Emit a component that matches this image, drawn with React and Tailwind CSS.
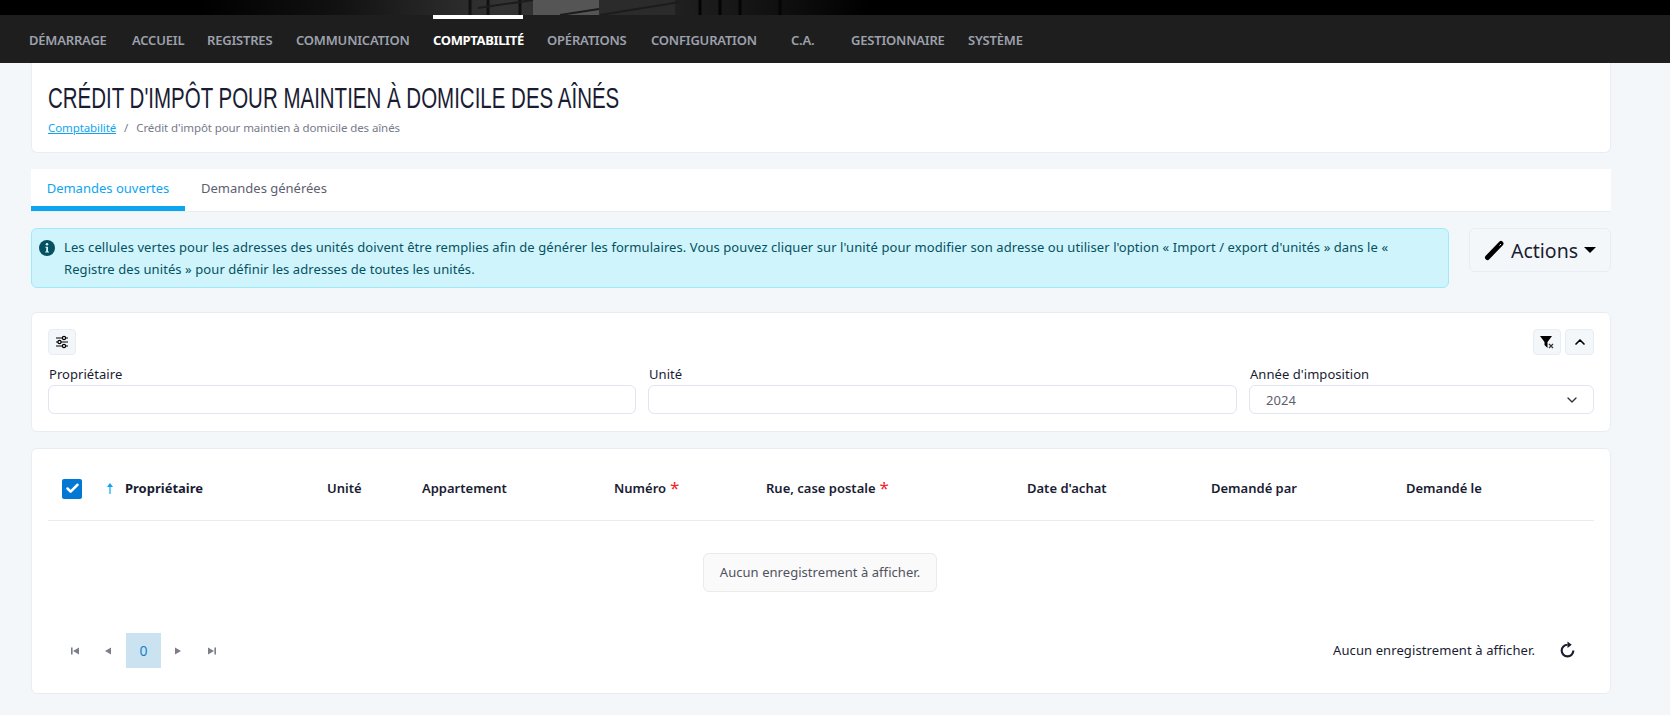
import React from 'react';
import { ChevronDown, ChevronUp, Check } from 'lucide-react';

const NAV_ITEMS = [
    { label: 'DÉMARRAGE', cls: 'ml-[29px] w-[79px]' },
    { label: 'ACCUEIL', cls: 'ml-[24px] w-[50px]' },
    { label: 'REGISTRES', cls: 'ml-[25px] w-[65px]' },
    { label: 'COMMUNICATION', cls: 'ml-[24px] w-[113px]' },
    { label: 'COMPTABILITÉ', cls: 'ml-[24px] w-[90px]', active: true },
    { label: 'OPÉRATIONS', cls: 'ml-[24px] w-[79px]' },
    { label: 'CONFIGURATION', cls: 'ml-[25px] w-[104px]' },
    { label: 'C.A.', cls: 'ml-[36px] w-[24px]' },
    { label: 'GESTIONNAIRE', cls: 'ml-[36px] w-[93px]' },
    { label: 'SYSTÈME', cls: 'ml-[24px] w-[56px]' },
];

const COLUMNS = [
    { label: 'Unité', cls: 'w-[95px]' },
    { label: 'Appartement', cls: 'w-[192px]' },
    { label: 'Numéro', cls: 'w-[152px]', required: true },
    { label: 'Rue, case postale', cls: 'w-[261px]', required: true },
    { label: "Date d'achat", cls: 'w-[184px]' },
    { label: 'Demandé par', cls: 'w-[195px]' },
    { label: 'Demandé le', cls: 'w-[100px]' },
];

const PagerIcon = ({ d }) => (
    <svg width="10" height="10" viewBox="0 0 10 10" className="fill-[#7b7f8c]">
        <path d={d} />
    </svg>
);

const SmallButton = ({ children, cls }) => (
    <button className={`flex items-center justify-center h-[26px] rounded-[4px] border border-[#e8edf3] bg-[#f4f7fa] text-black ${cls}`}>
        {children}
    </button>
);

const TopStrip = () => (
    <svg width="1670" height="15" viewBox="0 0 1670 15" className="block">
        <defs>
            <linearGradient id="strip" x1="0" x2="1" y1="0" y2="0">
                <stop offset="0" stopColor="#000" />
                <stop offset="0.12" stopColor="#000" />
                <stop offset="0.2" stopColor="#111" />
                <stop offset="0.26" stopColor="#262626" />
                <stop offset="0.3" stopColor="#333" />
                <stop offset="0.36" stopColor="#2c2c2c" />
                <stop offset="0.42" stopColor="#1c1c1c" />
                <stop offset="0.48" stopColor="#0c0c0c" />
                <stop offset="0.52" stopColor="#000" />
                <stop offset="1" stopColor="#000" />
            </linearGradient>
        </defs>
        <rect width="1670" height="15" fill="url(#strip)" />
        <rect x="533" y="0" width="66" height="15" fill="#555" />
        <rect x="600" y="0" width="75" height="15" fill="#2b2b2b" />
        <path d="M470 0V15M488 0V15M520 0V15" stroke="#111" strokeWidth="3" />
        <path d="M478 8L533 0M560 15L599 9M600 15L680 2" stroke="#1c1c1c" strokeWidth="2" />
        <path d="M700 0V15M720 0V15M740 0V15M780 0V15" stroke="#050505" strokeWidth="3" />
    </svg>
);

const App = () => {
    return (
        <div className="w-[1670px] h-[715px] overflow-hidden bg-[#f4f7fa] text-[#1a1c33] font-['Noto_Sans','Open_Sans',sans-serif] text-[13px]">
            <TopStrip />

            {/* Nav */}
            <nav className="h-[48px] bg-[#1e1e1e] flex items-center text-[13px] font-semibold tracking-[-0.2px] text-[#9da1ad]">
                {NAV_ITEMS.map((item) => (
                    <div
                        key={item.label}
                        className={`relative h-full flex items-center pt-[4px] whitespace-nowrap ${item.cls} ${item.active ? 'text-white font-bold tracking-[-0.35px]' : ''}`}
                    >
                        {item.active && <span className="absolute top-0 left-0 right-0 h-[4px] bg-white" />}
                        {item.label}
                    </div>
                ))}
            </nav>

            <main className="px-[31px] w-[1612px] box-content">
                <div className="w-[1580px]">
                    {/* Title card */}
                    <section className="h-[90px] bg-white border border-t-0 border-[#e8edf3] rounded-b-[6px] px-[16px] pt-[16px]">
                        <h1 className="text-[30px] leading-[38px] origin-left scale-x-[0.683] font-['Liberation_Sans',sans-serif] text-[#1a1c33] whitespace-nowrap">
                            CRÉDIT D'IMPÔT POUR MAINTIEN À DOMICILE DES AÎNÉS
                        </h1>
                        <p className="mt-[3px] text-[11.5px] tracking-[-0.1px] leading-[16px] text-[#777a8a]">
                            <span className="text-[#0ea5f0] underline">Comptabilité</span>
                            <span className="mx-[8px]">/</span>
                            Crédit d'impôt pour maintien à domicile des aînés
                        </p>
                    </section>

                    {/* Tabs */}
                    <div className="mt-[16px] h-[43px] bg-white border-b border-[#e8edf3] flex text-[13px]">
                        <div className="w-[154px] h-[42px] flex items-center justify-center text-[#0ea5f0] border-b-[5px] border-[#0ea5f0] pt-[3px]">
                            Demandes ouvertes
                        </div>
                        <div className="ml-[16px] h-[37px] pt-[3px] flex items-center text-[#5e6070]">Demandes générées</div>
                    </div>

                    {/* Alert + actions */}
                    <div className="mt-[16px] flex items-start justify-between">
                        <div className="w-[1418px] h-[60px] rounded-[6px] border border-[#9eeaf9] bg-[#cff4fc] text-[#055160] flex pl-[7px] pt-[7px] leading-[22px]">
                            <svg width="16" height="16" viewBox="0 0 16 16" className="mt-[4px] shrink-0">
                                <circle cx="8" cy="8" r="8" fill="#055160" />
                                <circle cx="8" cy="4.2" r="1.3" fill="#cff4fc" />
                                <path d="M6.4 6.7H9V11.4H10V12.5H6.2V11.4H7.2V7.8H6.4Z" fill="#cff4fc" />
                            </svg>
                            <p className="ml-[9px] w-[1345px] tracking-[0.08px]">
                                Les cellules vertes pour les adresses des unités doivent être remplies afin de générer les formulaires. Vous pouvez cliquer sur l'unité pour modifier son adresse ou utiliser l'option « Import / export d'unités » dans le « Registre des unités » pour définir les adresses de toutes les unités.
                            </p>
                        </div>
                        <button className="w-[142px] h-[44px] rounded-[6px] border border-[#e8edf3] bg-[#f4f7fa] flex items-center justify-center text-[19.5px] text-[#1a1c33]">
                            <svg width="22" height="22" viewBox="0 0 22 22" className="mr-[5px]">
                                <path d="M3.5 18.5 L17 4.5" stroke="#000" strokeWidth="5" strokeLinecap="round" />
                                <path d="M15.5 6.5 L17 5" stroke="#f4f7fa" strokeWidth="1" />
                            </svg>
                            <span className="pt-[1px]">Actions</span>
                            <span className="ml-[6px] w-0 h-0 border-x-[6px] border-x-transparent border-t-[6px] border-t-black" />
                        </button>
                    </div>

                    {/* Filters */}
                    <section className="mt-[24px] h-[120px] bg-white border border-[#e8edf3] rounded-[6px] px-[16px] pt-[16px]">
                        <div className="flex justify-between">
                            <SmallButton cls="w-[28px]">
                                <svg width="14" height="14" viewBox="0 0 14 14" fill="#f4f7fa" stroke="#000" strokeWidth="1.2">
                                    <path d="M1 3H13M1 7H13M1 11H13" />
                                    <circle cx="9" cy="3" r="1.6" />
                                    <circle cx="4.5" cy="7" r="1.6" />
                                    <circle cx="9" cy="11" r="1.6" />
                                </svg>
                            </SmallButton>
                            <div className="flex gap-[4px]">
                                <SmallButton cls="w-[28px]">
                                    <svg width="16" height="14" viewBox="0 0 16 14">
                                        <path d="M1 1 H13 L8.5 7 V13 L5.5 10 V7 Z" fill="#000" />
                                        <path d="M10 9 L14 13 M14 9 L10 13" stroke="#333" strokeWidth="1.2" />
                                    </svg>
                                </SmallButton>
                                <SmallButton cls="w-[29px]"><ChevronUp size={16} strokeWidth={2.5} /></SmallButton>
                            </div>
                        </div>
                        <div className="mt-[10px] grid grid-cols-[588px_589px_345px] gap-x-[12px] text-[13px] leading-[18px] tracking-[0.05px]">
                            <div>
                                <label className="pl-[1px]">Propriétaire</label>
                                <div className="mt-[2px] h-[29px] rounded-[6px] border border-[#e2e4ef] bg-white" />
                            </div>
                            <div>
                                <label className="pl-[1px]">Unité</label>
                                <div className="mt-[2px] h-[29px] rounded-[6px] border border-[#e2e4ef] bg-white" />
                            </div>
                            <div>
                                <label className="pl-[1px]">Année d'imposition</label>
                                <div className="mt-[2px] h-[29px] rounded-[6px] border border-[#e2e4ef] bg-white flex items-center justify-between pl-[16px] pr-[13px] text-[#5e6070]">
                                    2024
                                    <ChevronDown size={16} className="text-[#333]" />
                                </div>
                            </div>
                        </div>
                    </section>

                    {/* Table card */}
                    <section className="mt-[16px] h-[246px] bg-white border border-[#e8edf3] rounded-[6px] px-[16px]">
                        <div className="h-[72px] pt-[8px] border-b border-[#e8edf3] flex items-center font-semibold text-[13px] text-[#1a1c33]">
                            <span className="ml-[14px] w-[20px] h-[20px] rounded-[2px] bg-[#0078d4] flex items-center justify-center">
                                <Check size={15} strokeWidth={4} className="text-white" />
                            </span>
                            <svg width="6" height="11" viewBox="0 0 6 11" className="ml-[25px]">
                                <path d="M3 0L6 4H3.6V11H2.4V4H0Z" fill="#0ea5f0" />
                            </svg>
                            <span className="ml-[12px] w-[202px] font-bold">Propriétaire</span>
                            {COLUMNS.map((col) => (
                                <span key={col.label} className={`relative whitespace-nowrap ${col.cls}`}>
                                    {col.label}
                                    {col.required && <span className="ml-[4px] font-normal text-[#f5222d] text-[17px] leading-none align-top">*</span>}
                                </span>
                            ))}
                        </div>

                        <div className="h-[112px] pt-[32px] flex justify-center">
                            <div className="ml-[-2px] w-[234px] h-[39px] rounded-[6px] border border-[#ebebeb] bg-[#fafafa] flex items-center justify-center tracking-[0.05px] text-[#50525f]">
                                Aucun enregistrement à afficher.
                            </div>
                        </div>

                        <div className="flex items-center h-[35px]">
                            <span className="ml-[22px] w-[33px]"><PagerIcon d="M1 1.5h1.6v7H1z M9 1.5v7L3 5z" /></span>
                            <span className="w-[23px]"><PagerIcon d="M8 1.5v7L2 5z" /></span>
                            <span className="w-[35px] h-[35px] bg-[#cbe2f1] text-[#1983c9] text-[14px] flex items-center justify-center">0</span>
                            <span className="ml-[12px] w-[34px]"><PagerIcon d="M2 1.5v7L8 5z" /></span>
                            <span className="w-[10px]"><PagerIcon d="M1 1.5v7L7 5z M7.4 1.5H9v7H7.4z" /></span>
                            <span className="ml-auto tracking-[0.1px] text-[#1a1c33]">Aucun enregistrement à afficher.</span>
                            <svg width="17" height="17" viewBox="0 0 16 16" className="ml-[24px] mr-[18px] mb-[2px] text-[#1a1c33]">
                                <path d="M8 3.5A5.5 5.5 0 1 0 13.5 9" fill="none" stroke="currentColor" strokeWidth="2" />
                                <path d="M8 0.5L12 3.5L8 6.5Z" fill="currentColor" />
                            </svg>
                        </div>
                    </section>
                </div>
            </main>
        </div>
    );
};

export default App;
